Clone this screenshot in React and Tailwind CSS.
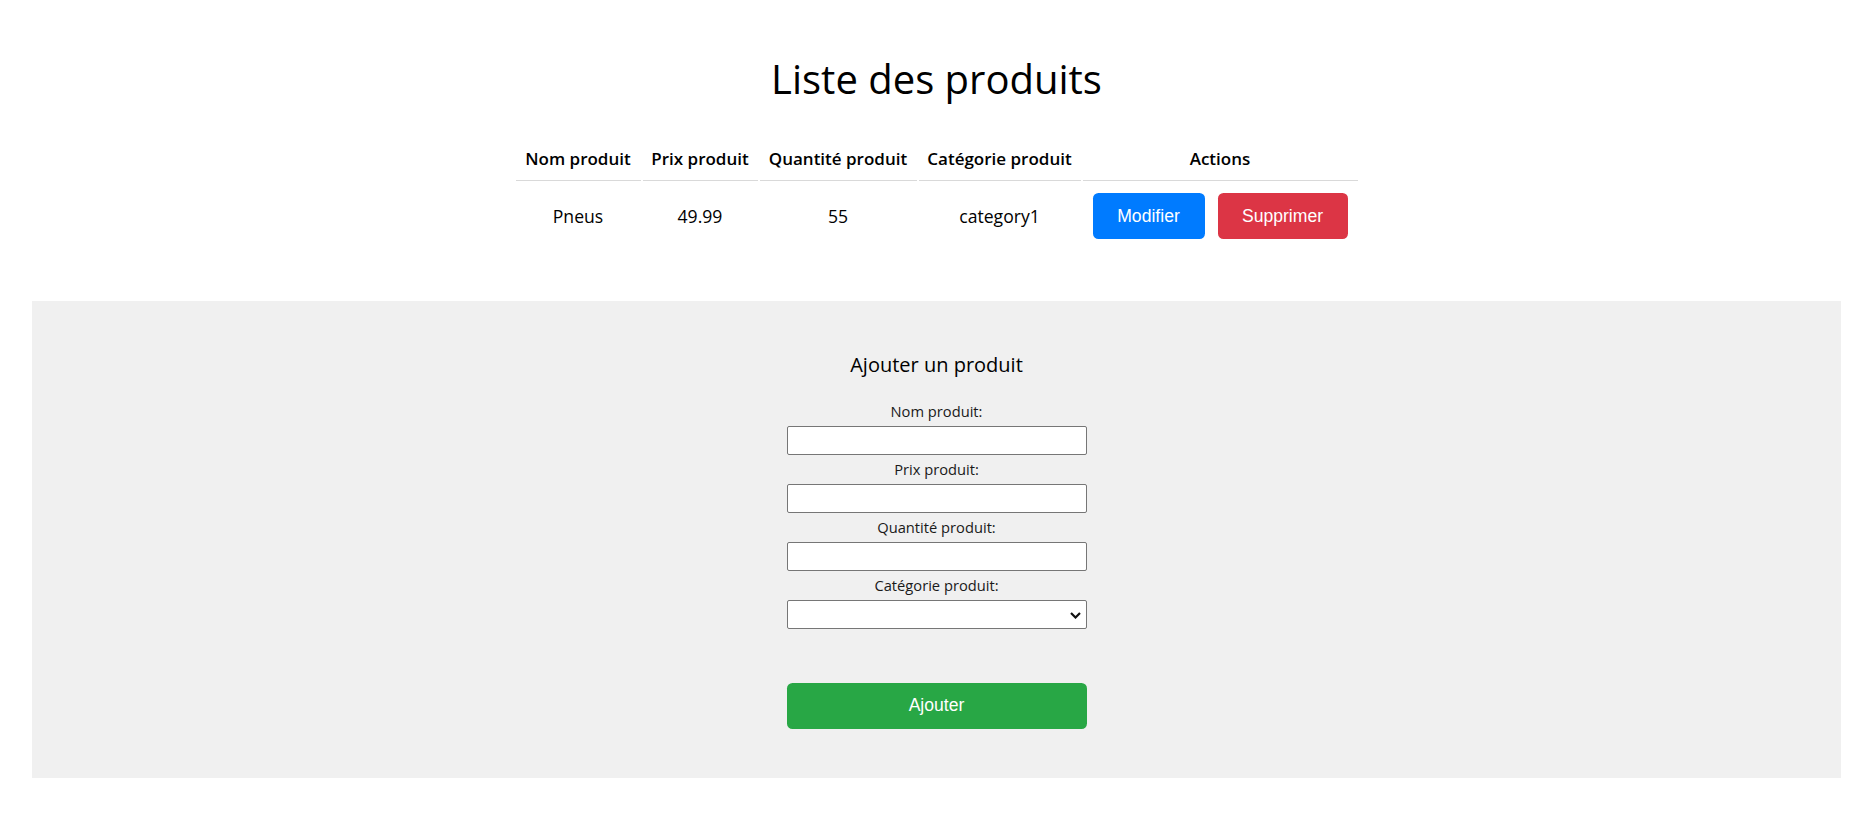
import React from "react";

const products = [{ name: "Pneus", price: "49.99", qty: "55", category: "category1" }];

const fields = ["Nom produit:", "Prix produit:", "Quantité produit:"];

const th = "px-[4px] py-[9.5px] leading-[24px] text-[17px] font-semibold whitespace-nowrap border-b border-[#d9d9d9]";

export default function App() {
  return (
    <div className="min-h-screen bg-white text-black font-['Open_Sans',sans-serif]">
      {/* Liste */}
      <div className="flex flex-col items-center pt-[52px]">
        <h1 className="text-[40px] leading-[54px] font-medium">Liste des produits</h1>

        <table className="mt-[29px] border-separate border-spacing-[2px] text-[17.6px]">
          <thead>
            <tr>
              <th className={`w-[125px] ${th}`}>Nom produit</th>
              <th className={`w-[115px] ${th}`}>Prix produit</th>
              <th className={`w-[157px] ${th}`}>Quantité produit</th>
              <th className={`w-[162px] ${th}`}>Catégorie produit</th>
              <th className={`w-[275px] ${th}`}>Actions</th>
            </tr>
          </thead>
          <tbody>
            {products.map((p) => (
              <tr key={p.name}>
                <td className="text-center px-[4px] py-[10px]">{p.name}</td>
                <td className="text-center px-[4px] py-[10px]">{p.price}</td>
                <td className="text-center px-[4px] py-[10px]">{p.qty}</td>
                <td className="text-center px-[4px] py-[10px]">{p.category}</td>
                <td className="px-[4px] py-[10px]">
                  <div className="flex justify-center gap-[13px] font-['Liberation_Sans',Arial,sans-serif]">
                    <button className="h-[46px] w-[112px] rounded-[5.5px] bg-[#007bff] text-white text-[17.6px]">Modifier</button>
                    <button className="h-[46px] w-[130px] rounded-[5.5px] bg-[#dc3545] text-white text-[17.6px]">Supprimer</button>
                  </div>
                </td>
              </tr>
            ))}
          </tbody>
        </table>
      </div>

      {/* Formulaire */}
      <div className="mx-[32px] mt-[49.5px] bg-[#f0f0f0] pt-[50px] pb-[49px] flex flex-col items-center">
        <h3 className="text-[20px] leading-[27px] font-normal">Ajouter un produit</h3>
        <form className="mt-[19px] flex flex-col items-center w-[300px]" onSubmit={(e) => e.preventDefault()}>
          {fields.map((label) => (
            <div key={label} className="flex flex-col items-center w-full">
              <label className="text-[14.7px] leading-[29px] text-[#1a1a1a]">{label}</label>
              <input type="text" className="h-[29px] w-full bg-white border border-[#767676] rounded-[2px] px-1 outline-none" />
            </div>
          ))}
          <div className="flex flex-col items-center w-full">
            <label className="text-[14.7px] leading-[29px] text-[#1a1a1a]">Catégorie produit:</label>
            <div className="relative w-full">
              <select className="appearance-none h-[29px] w-full bg-white border border-[#767676] rounded-[2px] px-1 outline-none">
                <option value=""></option>
              </select>
              <svg className="absolute right-[6px] top-[12px] pointer-events-none" width="11" height="7" viewBox="0 0 11 7" fill="none">
                <path d="M1 1l4.5 4.5L10 1" stroke="#111" strokeWidth="2.2" />
              </svg>
            </div>
          </div>
          <button type="submit" className="mt-[54px] h-[46px] w-full rounded-[5.5px] bg-[#28a745] text-white text-[17.6px] font-['Liberation_Sans',Arial,sans-serif]">
            Ajouter
          </button>
        </form>
      </div>
    </div>
  );
}
